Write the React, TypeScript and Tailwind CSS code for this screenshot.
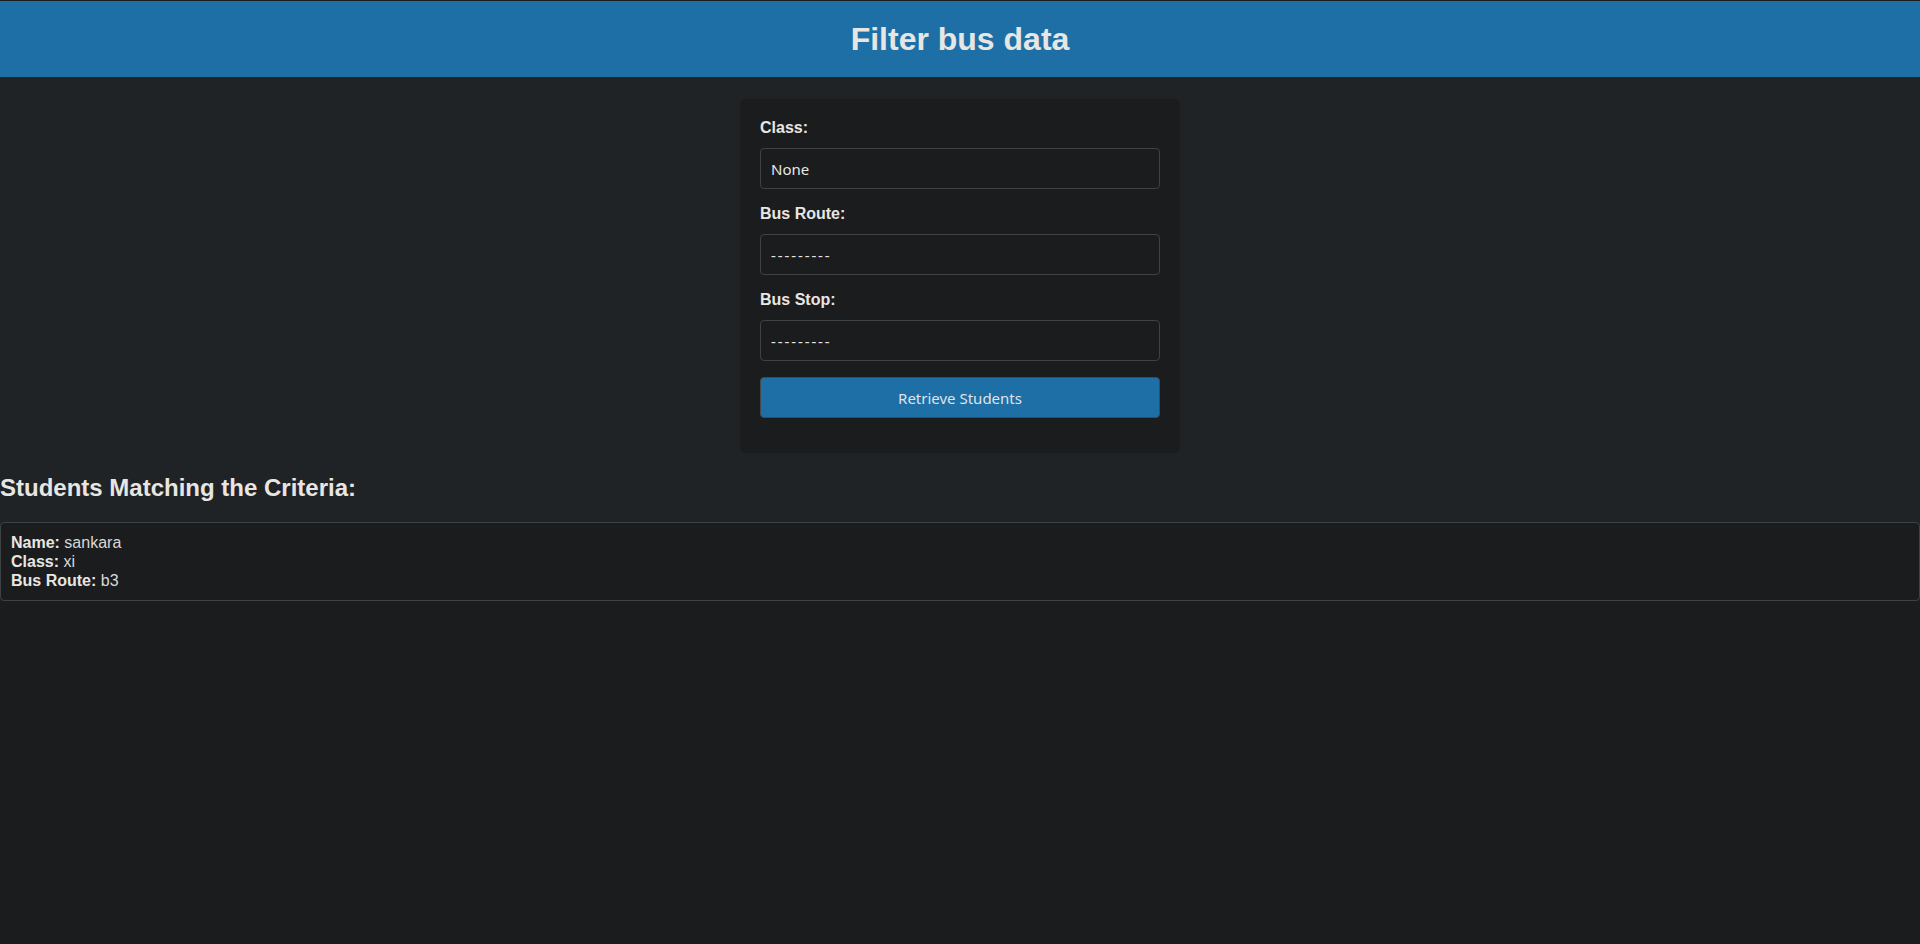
import React from "react";

const fields = [
  { label: "Class:", value: "None", dash: false },
  { label: "Bus Route:", value: "---------", dash: true },
  { label: "Bus Stop:", value: "---------", dash: true },
];

export default function App() {
  return (
    <div className="min-h-[944px] bg-[#1b1c1e] pt-px font-['Liberation_Sans',Arial,sans-serif] text-[#e8e6e3]">
      <header className="h-[76px] bg-[#1f6fa7] flex items-center justify-center">
        <h1 className="text-[32px] font-bold leading-[37px] text-[#e8e6e3]">Filter bus data</h1>
      </header>
      <div className="bg-[#202326] pt-[22px]">
        <div className="w-[440px] mx-auto bg-[#1b1c1e] rounded-[5px] px-5 pt-5 pb-[35px]">
          {fields.map((f) => (
            <div key={f.label}>
              <div className="text-[16px] font-bold leading-[18px] h-[18px] mb-[11px] text-[#e8e6e3]">{f.label}</div>
              <div className="h-[41px] mb-4 rounded-[4px] border border-[#3f4244] bg-[#1b1c1e] flex items-center pl-[10px] pt-[2px] font-['Noto_Sans',sans-serif] text-[15px] text-[#e8e6e3]">
                <span className={f.dash ? "tracking-[1.9px]" : ""}>{f.value}</span>
              </div>
            </div>
          ))}
          <div className="h-[41px] rounded-[4px] border border-[#45494d] bg-[#1f6fa7] flex items-center justify-center pt-px font-['Noto_Sans',sans-serif] text-[15px] text-[#dfe3e7]">
            Retrieve Students
          </div>
        </div>
        <h2 className="mt-[21px] mb-5 text-[24px] font-bold leading-[27.6px] text-[#e8e6e3]">
          Students Matching the Criteria:
        </h2>
        <div className="border border-[#3f4244] rounded-[4px] bg-[#1b1c1e] p-[10px] text-[16px] leading-[19px] text-[#d6d9dc]">
          <div><span className="font-bold text-[#e8e6e3]">Name:</span> sankara</div>
          <div><span className="font-bold text-[#e8e6e3]">Class:</span> xi</div>
          <div><span className="font-bold text-[#e8e6e3]">Bus Route:</span> b3</div>
        </div>
      </div>
    </div>
  );
}
